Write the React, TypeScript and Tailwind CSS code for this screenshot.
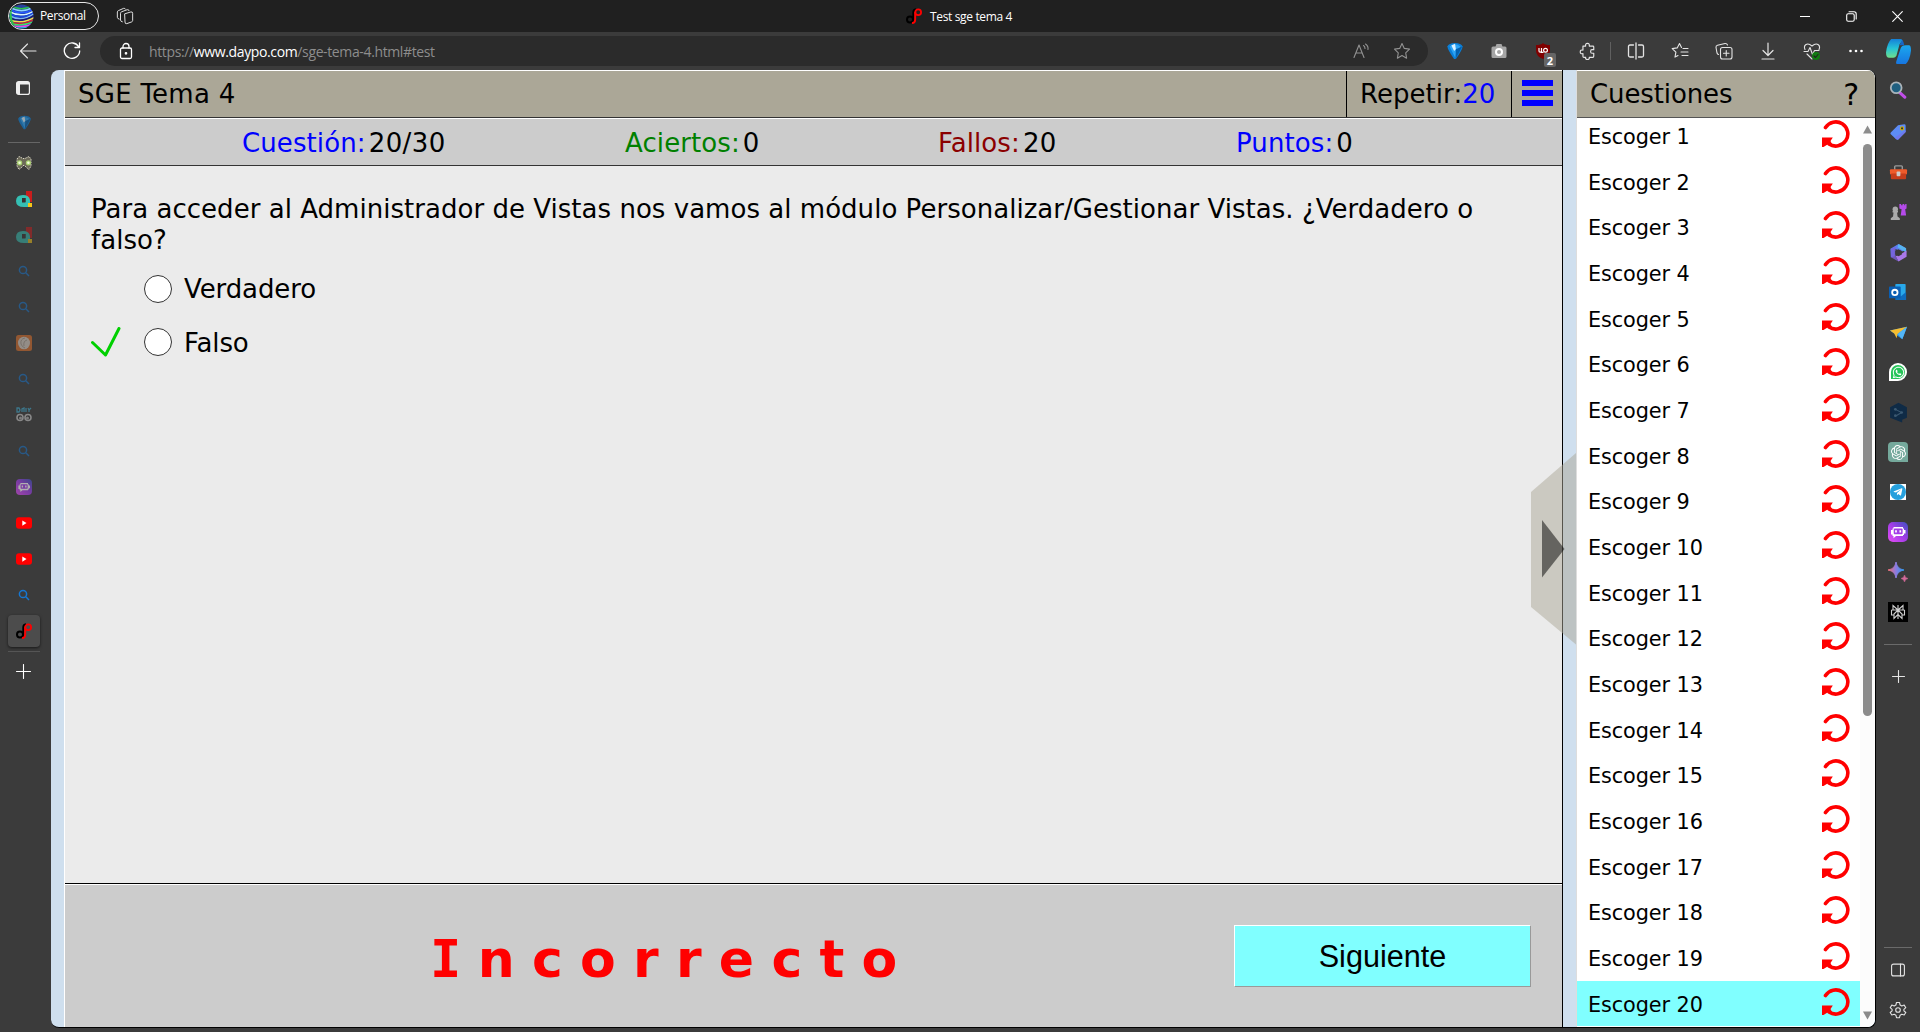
import React from "react";
import { FaWhatsapp, FaTelegramPlane } from "react-icons/fa";
import { SiOpenai } from "react-icons/si";

type IconProps = { size?: number; className?: string; box?: string; children: React.ReactNode };

/** Thin outlined icon used by the browser chrome. */
function Line({ size = 20, className = "", box = "0 0 20 20", children }: IconProps) {
  return (
    <svg width={size} height={size} viewBox={box} fill="none" stroke="currentColor" strokeWidth="1.1" strokeLinecap="round" strokeLinejoin="round" className={`block shrink-0 ${className}`}>
      {children}
    </svg>
  );
}

function Pic({ size = 20, className = "", box = "0 0 20 20", children }: IconProps) {
  return (
    <svg width={size} height={size} viewBox={box} fill="none" className={`block shrink-0 ${className}`}>
      {children}
    </svg>
  );
}

function DaypoIcon() {
  return (
    <Pic size={16} box="0 0 16 16">
      <circle cx="4" cy="11.500" r="3" stroke="#000" strokeWidth="2" />
      <path d="M7.200 14V4.500Q7.200 1.500 10 1.200" stroke="#000" strokeWidth="1.800" />
      <circle cx="12.200" cy="4.200" r="2.900" stroke="#f00" strokeWidth="1.800" />
      <path d="M9.200 4V11.500Q9.200 14.800 6 15.200" stroke="#f00" strokeWidth="1.900" />
    </Pic>
  );
}

function DropIcon({ size = 18, dim = false }: { size?: number; dim?: boolean }) {
  return (
    <Pic size={size} className={dim ? "opacity-60" : ""}>
      <path d="M1.500 5Q3 1 10 1T18.500 5Q18 9 11 19H9Q2 9 1.500 5Z" fill="#0a7fd8" />
      <path d="M4 5Q10 0 16 5L10.500 18Z" fill="#2ba3f5" />
      <path d="M6 4L10 2L11 8L9 10Z" fill="#d9f1ff" />
      <path d="M11 8L18 5L10.500 19Z" fill="#0560ad" />
    </Pic>
  );
}

function SearchGlyph({ dim = true }: { dim?: boolean }) {
  return (
    <Pic size={12} box="0 0 12 12" className={dim ? "opacity-50" : ""}>
      <circle cx="5" cy="5" r="3.600" stroke="#1677d2" strokeWidth="1.500" />
      <path d="M7.800 7.800L11 11" stroke="#1677d2" strokeWidth="1.500" />
    </Pic>
  );
}

function DasIcon({ dim = false }: { dim?: boolean }) {
  return (
    <Pic size={16} box="0 0 16 16" className={dim ? "opacity-50" : ""}>
      <path d="M10 0h6v11h-6z" fill="#c91d1d" />
      <path d="M11 12h5v4h-5z" fill="#f5c518" />
      <path d="M0 10Q0 4 7 4Q13 4 14 9V12H9.500V7H6.500V11H12V16H8Q0 16 0 10Z" fill="#35c0b4" />
      <path d="M6 7h3.500v4.500H6z" fill="#383030" />
    </Pic>
  );
}

function EyesIcon({ text = false }: { text?: boolean }) {
  return text ? (
    <Pic size={16} box="0 0 16 16" className="opacity-60">
      <path d="M1 1v4h2l1-2-1-2zM6 5V2l2-1v4M10 1v4M12 1l1 2 2-2M13 3v2" stroke="#3f9fc0" strokeWidth="1.300" />
      <circle cx="4" cy="10.500" r="3" fill="#333" stroke="#bbb" strokeWidth="1.600" />
      <circle cx="12" cy="10.500" r="3" fill="#333" stroke="#bbb" strokeWidth="1.600" />
      <circle cx="4.500" cy="11" r="1.500" fill="#aaa" />
      <circle cx="11.500" cy="11" r="1.500" fill="#aaa" />
    </Pic>
  ) : (
    <Pic size={16} box="0 0 16 16">
      <path d="M1 4L3 1.500L7 3.500H9L13 1.500L15 4V11L13 14.500L10 12L8 10L6 12L3 14.500L1 11Z" fill="#6c6a58" stroke="#dcd9c8" strokeWidth="1" strokeDasharray="1.500 1" />
      <circle cx="3.600" cy="7.800" r="2.600" fill="#a8d070" />
      <circle cx="12.400" cy="7.800" r="2.600" fill="#a8d070" />
      <circle cx="3.600" cy="7.800" r="1.300" fill="#efffdc" />
      <circle cx="12.400" cy="7.800" r="1.300" fill="#efffdc" />
    </Pic>
  );
}

function PoeIcon({ size, id, dim = false }: { size: number; id: string; dim?: boolean }) {
  return (
    <Pic size={size} className={dim ? "opacity-60" : ""}>
      <defs>
        <linearGradient id={id} x1="0" y1="1" x2="1" y2="0">
          <stop offset="0" stopColor="#e64df5" />
          <stop offset="0.5" stopColor="#a33de8" />
          <stop offset="1" stopColor="#3c50c0" />
        </linearGradient>
      </defs>
      <rect width="20" height="20" rx="5" fill={`url(#${id})`} />
      <path d="M5.500 5h9.500v1.500h1V8h1.500v3.500H16V13h-1v1H8l-2.500 2.200V14H4.500v-1.500H3V8h1.500V6.500h1z" fill="#fff" />
      <rect x="5.700" y="6.600" width="8.900" height="5.600" rx="1" fill="#a33de8" />
      <path d="M8 8.200v2.400M12.300 8.200v2.400" stroke="#fff" strokeWidth="1.700" />
    </Pic>
  );
}

function YouTubeIcon() {
  return (
    <Pic size={16} box="0 0 16 16">
      <rect y="2.300" width="16" height="11.500" rx="3" fill="#f00" />
      <path d="M6.300 5.500v5.200L10.500 8.100z" fill="#fff" />
    </Pic>
  );
}

function ShellIcon() {
  return (
    <Pic size={16} box="0 0 16 16" className="opacity-80">
      <rect width="16" height="16" rx="2.500" fill="#a85f30" />
      <ellipse cx="8" cy="8" rx="6" ry="6.300" fill="#aaa29a" />
      <path d="M9 3Q4 4 5 9Q6 12 9 13M11 5Q7 6 8 11" stroke="#807870" strokeWidth=".8" />
    </Pic>
  );
}

const sideTabs: React.ReactNode[] = [
  <EyesIcon />, <DasIcon />, <DasIcon dim />, <SearchGlyph />, <SearchGlyph />, <ShellIcon />, <SearchGlyph />,
  <EyesIcon text />, <SearchGlyph />, <PoeIcon size={16} id="poeTab" dim />, <YouTubeIcon />, <YouTubeIcon />, <SearchGlyph dim={false} />,
];

function TitleBar() {
  return (
    <header className="flex h-8 items-center bg-[#202020] text-white">
      <div className="ml-2 flex h-7 w-[91px] items-center rounded-full border border-[#e8e8e8]">
        <Pic size={25} box="0 0 24 24">
          <defs><clipPath id="avatar"><circle cx="12" cy="12" r="11.500" /></clipPath></defs>
          <g clipPath="url(#avatar)" strokeWidth="1.400">
            <rect width="24" height="24" fill="#263f9e" />
            <path d="M1 1Q12 8 23 1" stroke="#2bc24e" />
            <path d="M1 3Q12 10 23 3" stroke="#8ad3ff" />
            <path d="M0 5Q12 12 24 5" stroke="#2458ff" />
            <path d="M0 7Q12 14 24 6.500" stroke="#d8f6ff" />
            <path d="M0 9Q12 16 24 8" stroke="#1848e0" />
            <path d="M0 11Q12 18 24 9.500" stroke="#7fb8f0" />
            <path d="M0 13Q12 19 24 11" stroke="#1d1b70" />
            <path d="M0 15Q12 20 24 13" stroke="#f3e04a" />
            <path d="M1 17Q12 21 24 15" stroke="#d3262f" />
            <path d="M2 19Q12 22 24 17" stroke="#3fe06a" />
            <path d="M4 21Q14 23 24 19" stroke="#e24fe8" />
            <path d="M5 23Q14 24 24 21" stroke="#2bc2e4" />
            <path d="M2.500 3Q-1 12 4.500 21" stroke="#2bc24e" strokeWidth="2.500" />
          </g>
        </Pic>
        <span className="ml-[6px] text-[12px] tracking-[-0.400px]">Personal</span>
      </div>
      <Line size={18} className="ml-[17px] text-[#e0e0e0]">
        <path d="M10 7.500l6.500-2q2-.5 2 1.500v8q0 1-1 1.500l-5.500 2q-2 .5-2-1.500zM7 16.500q-2-.3-2-2V7q0-1.200 1.200-1.700L12.500 3q1.800-.4 2 1M3.500 13.500q-2-.5-2-2V5.500q0-1 1.200-1.500L8.500 1.500q1.500-.4 2 .8" />
      </Line>
      <div className="ml-[772px] flex items-center">
        <DaypoIcon />
        <span className="ml-2 pt-px text-[12px] tracking-[-0.350px]">Test sge tema 4</span>
      </div>
      <div className="ml-auto flex items-center">
        <div className="flex w-[46px] justify-center"><Line size={10} box="0 0 10 10"><path d="M0 5.500H10" /></Line></div>
        <div className="flex w-[46px] justify-center"><Line size={11} box="0 0 11 11"><rect x=".7" y="2.700" width="7.500" height="7.500" rx="1.500" /><path d="M3 .7h5q2.200 0 2.200 2.200V8" /></Line></div>
        <div className="flex w-[46px] justify-center"><Line size={11} box="0 0 11 11"><path d="M.7.7l9.600 9.600M10.300.7L.7 10.300" /></Line></div>
      </div>
    </header>
  );
}

function Slot({ children, w = "w-11" }: { children?: React.ReactNode; w?: string }) {
  return <div className={`flex shrink-0 items-center justify-center ${w}`}>{children}</div>;
}

function ToolBar() {
  return (
    <nav className="flex h-[38px] items-center text-[#e4e4e4]">
      <Slot w="w-[56px]"><Line size={18} box="0 0 18 18"><path d="M17 9H1.500M8.500 2L1.500 9l7 7" /></Line></Slot>
      <Slot w="w-8"><Line size={18} box="0 0 18 18" className="text-white"><path d="M15.800 5A7.700 7.700 0 1 0 16.700 9M16.500 1v4.500H12" strokeWidth="1.300" /></Line></Slot>
      <div className="ml-3 flex h-[30px] w-[1328px] shrink-0 items-center rounded-full bg-[#2b2b2b]">
        <Line size={18} className="ml-[17px] text-white" box="0 0 18 18">
          <rect x="3.500" y="6" width="11" height="10.500" rx="1.500" strokeWidth="1.300" />
          <path d="M6 6V4.500a3 3 0 0 1 6 0V6" strokeWidth="1.300" /><circle cx="9" cy="11.300" r=".8" fill="currentColor" />
        </Line>
        <p className="ml-[14px] whitespace-nowrap text-[14px] tracking-[-0.370px] text-[#8d8d8d]">
          https://<span className="text-white">www.daypo.com</span>/sge-tema-4.html#test
        </p>
        <div className="ml-auto mr-[6px] flex text-[#929292]">
          <Slot w="w-10"><Line size={18} box="0 0 18 18"><path d="M1 15.500L6 3l5 12.500M2.800 11h6.500M10.500 3.500q1.500 1 1.500 3M12.500 2q3 2 2.500 5.500" /></Line></Slot>
          <Slot w="w-10"><Line size={18} box="0 0 18 18"><path d="M9 1.500l2.300 4.900 5.200.7-3.800 3.700.9 5.400L9 13.600l-4.600 2.600.9-5.400L1.500 7.100l5.200-.7z" /></Line></Slot>
        </div>
      </div>
      <div className="ml-[5px] flex">
        <Slot><DropIcon /></Slot>
        <Slot>
          <Pic size={16} box="0 0 16 16">
            <path d="M2 3.500h2.500L5.500 1h5l1 2.500H14q1.500 0 1.500 1.500v8.500q0 1.500-1.500 1.500H2Q.5 15 .5 13.500V5Q.5 3.500 2 3.500Z" fill="#a6a6a6" />
            <circle cx="8" cy="9" r="3" stroke="#fff" strokeWidth="2" />
          </Pic>
        </Slot>
        <Slot>
          <div className="relative">
            <Pic size={16} box="0 0 16 16">
              <path d="M8 0Q10 2 15 2V8Q15 13 8 16Q1 13 1 8V2Q6 2 8 0Z" fill="#800000" />
              <path d="M4 5V8q0 1.200 1.200 1.200T6.500 8V5V9.300H8.500" stroke="#fff" strokeWidth="1.200" /><circle cx="10.500" cy="7.300" r="1.900" stroke="#fff" strokeWidth="1.200" />
            </Pic>
            <span className="absolute left-[9px] top-[10px] flex h-[14px] w-[12px] items-center justify-center rounded-[2px] bg-[#666] text-[11px] font-bold leading-none text-white">2</span>
          </div>
        </Slot>
        <Slot><Line size={18}><path d="M4 4.500h3q-.5-3 2-3t2 3h4q1 0 1 1v3h-2q-1.500 0-1.500 2t1.500 2h2v3q0 1.500-1 1.500h-4q.5 2.500-2 2.500t-2-2.500H5q-1 0-1-1v-3q-3 .5-3-2t3-2z" strokeWidth="1.300" transform="translate(1.500 0)" /></Line></Slot>
      </div>
      <div className="ml-px h-[18px] w-px bg-[#606060]" />
      <div className="ml-[3px] flex">
        <Slot><Line size={18} box="0 0 18 18"><path d="M9 1v16M6.500 3H3Q1.500 3 1.500 4.500v9Q1.500 15 3 15h3.500M11.500 3H15q1.500 0 1.500 1.500v9Q16.500 15 15 15h-3.500" strokeWidth="1.300" /></Line></Slot>
        <Slot><Line size={18} box="0 0 18 18"><path d="M10.500 5.500L8.500 1.500l-2.300 4.400-5 .7 3.700 3.500-.9 5 3-1.600M12 6.500h5M10 10h7M11 13.500h6" /></Line></Slot>
        <Slot><Line size={18} box="0 0 18 18"><rect x="5.500" y="5.500" width="11.500" height="11.500" rx="2" /><path d="M11.250 8.500v5.500M8.500 11.250H14M3.500 12.500Q2.500 12.200 2 11L1 5.500Q.8 3.700 2.500 3.300L10 1.500q1.800-.3 2.500 1.500" /></Line></Slot>
        <Slot><Line size={18} box="0 0 18 18"><path d="M9 1v12M4 8.500L9 13.500l5-5M3 17h12" strokeWidth="1.200" /></Line></Slot>
        <Slot>
          <Line size={18} box="0 0 18 18">
            <path d="M2 7.500Q.5 4 3 2.500T9 4q3.500-3 6-1.500T16 7.500M1 9.500h4l2-4 2.500 7 2-4H16M4 12l5 5" />
            <circle cx="13" cy="14" r="4" fill="#107c10" stroke="none" /><path d="M11 14l1.500 1.500 2.500-3" stroke="#222" />
          </Line>
        </Slot>
        <Slot><Pic size={18} box="0 0 18 18"><g fill="#fff"><circle cx="3.500" cy="9" r="1.300" /><circle cx="9" cy="9" r="1.300" /><circle cx="14.500" cy="9" r="1.300" /></g></Pic></Slot>
        <Slot w="w-10">
          <Pic size={25} box="0 0 24 24">
            <defs>
              <linearGradient id="cpA" x1="0" y1="0" x2="0" y2="1"><stop stopColor="#1580d8" /><stop offset=".5" stopColor="#26c3d5" /><stop offset="1" stopColor="#70e08a" /></linearGradient>
              <linearGradient id="cpB" x1="0" y1="0" x2="0" y2="1"><stop stopColor="#1ba7ef" /><stop offset="1" stopColor="#1776e0" /></linearGradient>
            </defs>
            <path d="M5 0H14Q16 0 15.500 2L13 5L10 16Q9 18 7 18H3Q0 18 0 13Q1 4 5 0Z" fill="url(#cpA)" />
            <path d="M14 0Q16.500 0 17.500 6H13L15.500 1Z" fill="#1766c8" />
            <path d="M19 6H22Q24 6 24 11Q23 20 19 24H11Q9 24 10 21L14 9Q15 6 19 6Z" fill="url(#cpB)" />
          </Pic>
        </Slot>
      </div>
    </nav>
  );
}

function LeftRail() {
  return (
    <aside className="flex w-[51px] shrink-0 flex-col">
      <div className="flex h-9 w-12 items-center justify-center">
        <Pic size={14} box="0 0 14 14" className="-ml-[2px]"><rect x=".6" y=".6" width="12.800" height="12.800" rx="2" stroke="#eee" strokeWidth="1.200" /><path d="M1 1h3v12H1zM1 1h12v2.500H1z" fill="#eee" /></Pic>
      </div>
      <div className="flex h-8 w-12 items-center justify-center"><DropIcon size={15} dim /></div>
      <div className="ml-2 mt-1 h-px w-8 bg-[#666]" />
      <div className="mt-[2px] flex w-12 flex-col">
        {sideTabs.map((icon, i) => (
          <div key={i} className="flex h-9 items-center justify-center">{icon}</div>
        ))}
      </div>
      <div className="ml-2 mt-[2px] flex size-8 items-center justify-center rounded-[4px] bg-[#4c4c4c] shadow-[0_1px_3px_rgba(0,0,0,0.6)]"><DaypoIcon /></div>
      <div className="ml-2 mt-1 h-px w-8 bg-[#555]" />
      <div className="mt-[12px] flex w-[47px] justify-center"><Line size={15} box="0 0 15 15" className="text-white"><path d="M7.500.5v14M.5 7.500h14" /></Line></div>
    </aside>
  );
}

const railIcons: React.ReactNode[] = [
  <Pic size={18} className="-mt-1"><path d="M12 13l5.500 5" stroke="#c04de8" strokeWidth="3.500" strokeLinecap="round" /><circle cx="8" cy="7.500" r="6" fill="#1f5f80" stroke="#aab4ba" strokeWidth="2" /></Pic>,
  <Pic size={18}><path d="M10 2.500L17 1.500Q18.500 1.500 18.500 3V10L10 18.500Q9 19 8 18L2 12.500Q1 11.500 2 10.500Z" fill="#5d8cf5" /><path d="M18.500 8V10L10 18.500 6 16.500Z" fill="#6f78ee" /><circle cx="14.500" cy="6" r="1.800" stroke="#d9b400" strokeWidth="1.200" fill="#333" /></Pic>,
  <Pic size={19}><path d="M6 7V4Q6 3 7 3h6q1 0 1 1v3" stroke="#999" strokeWidth="1.500" /><rect x="1" y="6.500" width="18" height="5.500" rx="1" fill="#ef5b2b" /><rect x="2" y="11" width="16" height="6" rx="1" fill="#c73e1c" /><rect x="8" y="9" width="4" height="5" rx="1" fill="#ccc" /></Pic>,
  <Pic size={18}><path d="M11.500 1h2v1.500H15V1h2v1.500h1V1h1.500v5L18 7l1 7h-6l1-7-2.500-1z" fill="#b54bea" /><circle cx="7" cy="7" r="3" fill="#aaa" /><path d="M4 9h6v1.500H9l.5 4.500 2.500 2v2H2v-2l2.500-2L5 10.500H4z" fill="#aaa" /></Pic>,
  <Pic size={19}><path d="M10 1L18 5.500L14 9L6 6V14L2 15L1.500 6Z" fill="#5a7ff0" /><path d="M10 1L18 5.500V10L9 4.500Z" fill="#57b4f0" /><path d="M18.500 8V14.500L10 19.500L7 14L13.500 11Z" fill="#a878e8" /><path d="M2 6L7 4V14L10 19.500L2 15Z" fill="#7c5fd8" opacity=".8" /><path d="M10 6.500L13.500 8.500V12L10 14L6.500 12V8.500Z" fill="#3b3b3b" /></Pic>,
  <Pic size={18}><rect x="7" y="1" width="11.500" height="15" rx="1" fill="#28a8ea" /><path d="M7 12l6 3 6-5v9H7z" fill="#0f6cbd" /><rect x="0" y="4" width="13" height="13" rx="1" fill="#0a5fb4" /><circle cx="6.500" cy="10.500" r="3" stroke="#fff" strokeWidth="2" /></Pic>,
  <Pic size={19}><path d="M1 8L19 4L14 17Z" fill="#258ee0" /><path d="M1 8L19 4L9 11.500L8 16L5.500 11Z" fill="#f5bd31" /><path d="M19 4L9 11.500L14 17Z" fill="#53b6f7" /></Pic>,
  <div className="flex size-[18px] items-center justify-center rounded-full rounded-bl-[3px] border-2 border-white bg-[#25c458] text-white"><FaWhatsapp size={13} /></div>,
  <Pic size={21}><path d="M10 .8L18 5v10l-4.500 2v2.500L2 15V5z" fill="#0f2b46" /><path d="M7 7l6 3-6 3.500" stroke="#3b5870" strokeWidth="1" /><g fill="#3b5870"><circle cx="7" cy="7" r="1.300" /><circle cx="13" cy="10" r="1.300" /><circle cx="7" cy="13" r="1.300" /></g></Pic>,
  <div className="flex size-5 items-center justify-center rounded-[4px] rounded-br-none bg-[#75a99c] text-white"><SiOpenai size={15} /></div>,
  <div className="flex size-4 items-center justify-center bg-white"><div className="flex size-4 items-center justify-center rounded-full bg-[#26a0dd] text-white"><FaTelegramPlane size={10} /></div></div>,
  <PoeIcon size={20} id="poeRail" />,
  <Pic>
    <defs><linearGradient id="spark"><stop stopColor="#f06f70" /><stop offset=".5" stopColor="#8b7be0" /><stop offset="1" stopColor="#2c9cf0" /></linearGradient></defs>
    <path d="M8 0Q9 7 16 8Q9 9 8 16Q7 9 0 8Q7 7 8 0Z" fill="url(#spark)" stroke="url(#spark)" />
    <path d="M16.500 13Q17 16 20 16.500Q17 17 16.500 20Q16 17 13 16.500Q16 16 16.500 13Z" fill="#d46a9a" stroke="#d46a9a" strokeWidth=".5" />
  </Pic>,
  <Pic><rect width="20" height="20" fill="#000" /><path d="M10 3v14M10 8L5 3.500V8zM10 8l5-4.500V8zM3.500 8h13M3.500 8v5H6M16.500 8v5H14M10 8l-4 4v4.500l4-4zM10 8l4 4v4.500l-4-4z" stroke="#d0d0d0" strokeWidth="1.100" /></Pic>,
];

function RightRail() {
  return (
    <aside className="flex w-11 shrink-0 flex-col items-center pt-[2px] text-[#e4e4e4]">
      {railIcons.map((icon, i) => (
        <div key={i} className="flex h-10 w-11 items-center justify-center">{icon}</div>
      ))}
      <div className="mt-3 h-px w-7 bg-[#6a6a6a]" />
      <Line size={13} box="0 0 13 13" className="mt-[25px]"><path d="M6.500.5v12M.5 6.500h12" /></Line>
      <div className="mt-auto h-px w-7 bg-[#6a6a6a]" />
      <Line size={14} box="0 0 14 14" className="mt-[15px]"><rect x=".6" y="1.100" width="12.800" height="11.800" rx="2" /><path d="M9.500 1v12" /></Line>
      <Line size={18} box="0 0 18 18" className="mb-[13px] mt-[24px]">
        <path d="M7.500 1.500h3l.6 2.500 1.700.9 2.400-.8 1.600 2.600-1.900 1.600v1.500l1.900 1.700-1.600 2.500-2.400-.7-1.700.9-.6 2.500h-3l-.6-2.500-1.700-.9-2.400.7-1.600-2.500 1.900-1.700V8.300L1.200 6.700l1.600-2.600 2.400.8L6.900 4z" /><circle cx="9" cy="9" r="2.300" />
      </Line>
    </aside>
  );
}

const stats = [
  { label: "Cuestión:", value: "20/30", color: "text-[#0000ff]", width: "w-[383px]" },
  { label: "Aciertos:", value: "0", color: "text-[#008000]", width: "w-[313px]" },
  { label: "Fallos:", value: "20", color: "text-[#8b0000]", width: "w-[298px]" },
  { label: "Puntos:", value: "0", color: "text-[#0000ff]", width: "w-[300px]" },
];

function Option({ text, correct = false }: { text: string; correct?: boolean }) {
  return (
    <div className="flex h-[53.500px] items-center">
      <div className="w-[53px]">
        {correct && (
          <svg width="30" height="30" viewBox="0 0 30 30" fill="none" className="block"><path d="M1.500 15.500L14.500 28L28 1.500" stroke="#00d000" strokeWidth="3" strokeLinecap="round" strokeLinejoin="round" /></svg>
        )}
      </div>
      <div className="size-[28px] rounded-full border border-[#333] bg-white" />
      <span className="ml-[12px] pt-[2px] tracking-[-0.110px]">{text}</span>
    </div>
  );
}

function RetryIcon() {
  return (
    <svg width="28" height="28" viewBox="0 0 28 28" fill="none" className="block">
      <path d="M3.500 7.500A12.100 12.100 0 1 1 7 24" stroke="#f00" strokeWidth="3.600" strokeLinecap="round" />
      <path d="M0 17.500h10.800l-2.300 3.500 1.500 3-4.500.5-4 2.500H0z" fill="#f00" />
    </svg>
  );
}

function Quiz() {
  return (
    <main className="flex w-[1499px] shrink-0 flex-col border-l border-r border-l-white border-r-black text-[26px] leading-[31px] tracking-[0.030px] text-black">
      <div className="flex h-[48px] shrink-0 items-stretch border-b border-t border-b-[#333] border-t-white bg-[#aba797]">
        <h1 className="flex flex-1 items-center pl-[13px] tracking-[0.260px]">SGE Tema 4</h1>
        <div className="flex w-[165px] items-center border-l border-black pl-[13px] tracking-[0.050px]">Repetir:<span className="text-[#0000ff]">20</span></div>
        <button className="flex w-[51px] flex-col items-center justify-center gap-1 border-l border-black pb-[2px]">
          {[0, 1, 2].map((i) => <span key={i} className="h-[6px] w-[31px] bg-[#0000ff]" />)}
        </button>
      </div>
      <div className="flex h-[48px] shrink-0 items-center border-b border-t border-b-[#333] border-t-white bg-[#ccc] pl-[177px] pt-[2px]">
        {stats.map((s) => (
          <div key={s.label} className={s.width}><span className={`tracking-[0.100px] ${s.color}`}>{s.label}</span><span className="ml-[3px] tracking-[0.450px]">{s.value}</span></div>
        ))}
      </div>
      <section className="flex-1 bg-[#ebebeb] pl-[26px] pr-[60px] pt-[28px]">
        <p className="whitespace-nowrap">Para acceder al Administrador de Vistas nos vamos al módulo Personalizar/Gestionar Vistas. ¿Verdadero o<br />falso?</p>
        <div className="mt-[6px]">
          <Option text="Verdadero" />
          <Option text="Falso" correct />
        </div>
      </section>
      <footer className="flex h-[144px] shrink-0 items-center border-t border-black">
        <div className="flex h-full w-full items-center border-t border-white bg-[#ccc]">
          <p className="ml-[368px] mt-[5px] flex-1 whitespace-pre text-[52px] font-bold leading-none tracking-[-0.420px] text-[#ff0000]"><span className="inline-block w-[27px] indent-[-3px] font-['DejaVu_Sans_Mono']">I</span> n c o r r e c t o</p>
          <button className="mr-[31px] h-[62px] w-[297px] border border-b-[#999] border-l-white border-r-[#999] border-t-white bg-[#80ffff] font-['Liberation_Sans'] text-[30.600px] tracking-normal">Siguiente</button>
        </div>
      </footer>
    </main>
  );
}

function Questions() {
  return (
    <section className="flex w-[299px] shrink-0 flex-col overflow-hidden rounded-br-[8px] rounded-tr-[8px] border-l border-[#ddd] bg-white text-black">
      <div className="flex h-[48px] shrink-0 items-center justify-between border-b border-t border-b-[#555] border-t-white bg-[#aba797] pl-[13px] pr-[16px] text-[26px] tracking-[-0.110px]">
        <h2>Cuestiones</h2><span className="text-[30px]">?</span>
      </div>
      <div className="flex min-h-0 flex-1">
        <ol className="-mt-[5px] w-[283px] text-[20.800px] leading-none tracking-[-0.100px]">
          {Array.from({ length: 20 }, (_, i) => (
            <li key={i} className={i === 19 ? "flex h-[45.680px] items-center justify-between bg-[#80ffff] pl-[11px] pr-[10px]" : "flex h-[45.680px] items-center justify-between pl-[11px] pr-[10px]"}>
              <span className="pt-[3px]">Escoger {i + 1}</span>
              <div className="mb-[4px]"><RetryIcon /></div>
            </li>
          ))}
        </ol>
        <div className="flex w-[15px] flex-col items-center bg-[#fcfcfc] pb-[7px] pt-[7px]">
          <Pic size={9} box="0 0 9 8"><path d="M4.500 0L9 8H0z" fill="#8b8b8b" /></Pic>
          <div className="mt-[10px] h-[572px] w-[9px] rounded-full bg-[#8b8b8b]" />
          <Pic size={9} box="0 0 9 8" className="mt-auto"><path d="M0 0H9L4.500 8z" fill="#8b8b8b" /></Pic>
        </div>
      </div>
    </section>
  );
}

export default function App() {
  return (
    <div className="flex h-[1032px] w-[1920px] flex-col overflow-hidden bg-[#3b3b3b] font-['Open_Sans',sans-serif]">
      <TitleBar />
      <ToolBar />
      <div className="flex min-h-0 flex-1">
        <LeftRail />
        <div className="relative mb-1 flex w-[1825px] overflow-hidden rounded-[8px] border-b border-r border-black bg-[#cfdfee] pl-[13px] font-['DejaVu_Sans',sans-serif]">
          <Quiz />
          <div className="w-[13px] shrink-0" />
          <Questions />
          <svg width="45" height="192" viewBox="0 0 45 192" className="absolute left-[1480px] top-[383px]">
            <path d="M0 39L45 0V191.500L0 154Z" fill="#aba797" fillOpacity=".5" />
            <path d="M11 67L33.500 96L11 124.500Z" fill="#000" fillOpacity=".5" />
          </svg>
        </div>
        <RightRail />
      </div>
    </div>
  );
}
